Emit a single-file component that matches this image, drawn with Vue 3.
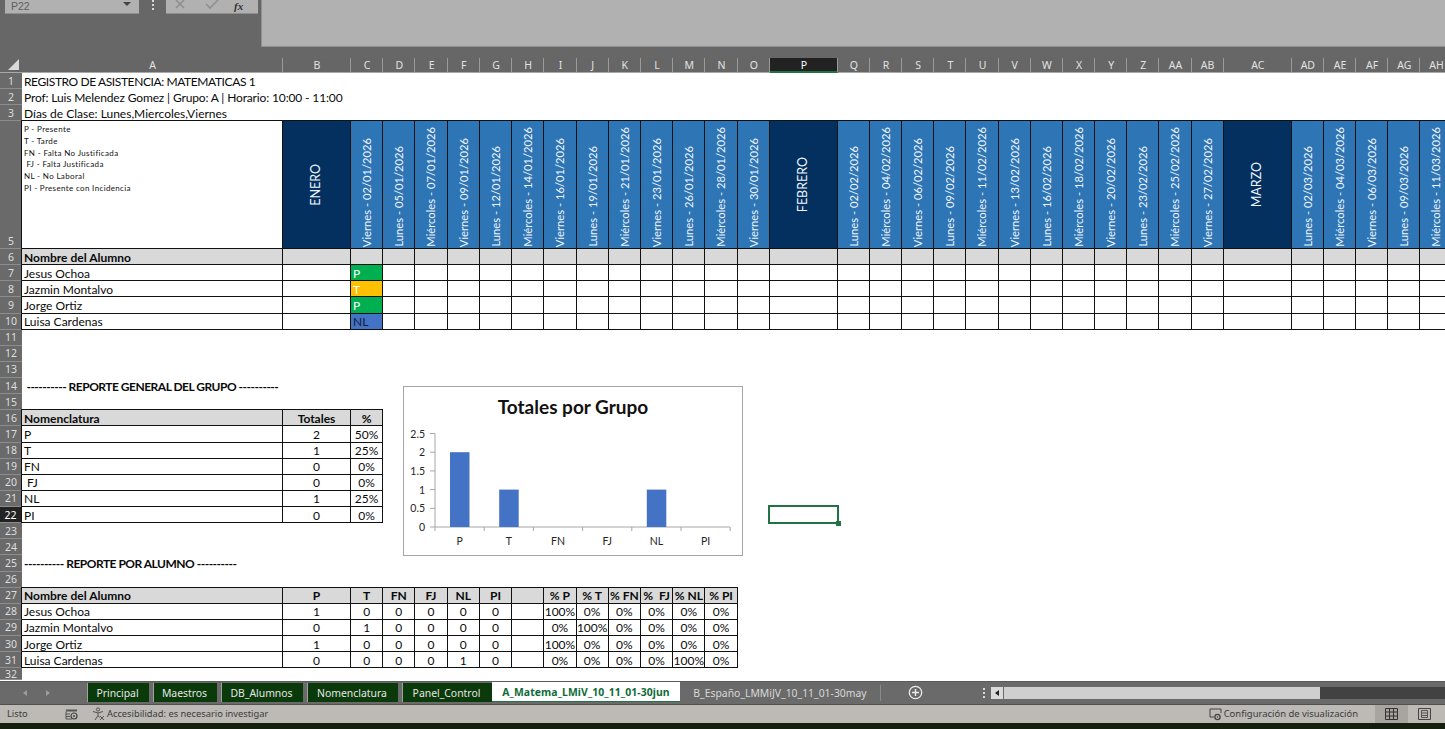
<script setup>
// columnas de la hoja: A..AH
const letters = 'ABCDEFGHIJKLMNOPQRSTUVWXYZ'.split('');
const columns = [...letters, 'AA', 'AB', 'AC', 'AD', 'AE', 'AF', 'AG', 'AH'];
const rowNums = [1, 2, 3, 5];
for (let n = 6; n <= 32; n++) rowNums.push(n);

const weekday = (d, m) => {
  const names = ['Domingo', 'Lunes', 'Martes', 'Miércoles', 'Jueves', 'Viernes', 'Sábado'];
  return names[new Date(2026, m - 1, d).getDay()];
};
const fmt = (d, m) => `${weekday(d, m)} - ${String(d).padStart(2, '0')}/${String(m).padStart(2, '0')}/2026`;

const header = [
  { month: 'ENERO' },
  ...[2, 5, 7, 9, 12, 14, 16, 19, 21, 23, 26, 28, 30].map((d) => fmt(d, 1)),
  { month: 'FEBRERO' },
  ...[2, 4, 6, 9, 11, 13, 16, 18, 20, 23, 25, 27].map((d) => fmt(d, 2)),
  { month: 'MARZO' },
  ...[2, 4, 6, 9, 11].map((d) => fmt(d, 3))
];

const legend = ['P - Presente', 'T - Tarde', 'FN - Falta No Justificada', '\u00a0FJ - Falta Justificada', 'NL - No Laboral', 'PI - Presente con Incidencia'];

const cells = {};
const put = (col, row, text, cls = '') => {
  cells[col + row] = { text, cls };
};

put('A', 1, 'REGISTRO DE ASISTENCIA: MATEMATICAS 1', 'caps');
put('A', 2, 'Prof: Luis Melendez Gomez | Grupo: A | Horario: 10:00 - 11:00', 'tight');
put('A', 3, 'Días de Clase: Lunes,Miercoles,Viernes');

// tabla principal de asistencia
columns.forEach((col, i) => {
  if (i === 0) {
    put(col, 5, '', 'b legend');
  } else {
    const h = header[i - 1];
    put(col, 5, h.month || h, h.month ? 'b month' : 'b date');
  }
  put(col, 6, '', 'b head');
  for (let r = 7; r <= 10; r++) put(col, r, '', 'b');
});
put('A', 6, 'Nombre del Alumno', 'b head strong');
const students = ['Jesus Ochoa', 'Jazmin Montalvo', 'Jorge Ortiz', 'Luisa Cardenas'];
students.forEach((s, i) => put('A', 7 + i, s, 'b'));
put('C', 7, 'P', 'b mark-p');
put('C', 8, 'T', 'b mark-t');
put('C', 9, 'P', 'b mark-p');
put('C', 10, 'NL', 'b mark-nl');

// reporte general
put('A', 14, '\u00a0---------- REPORTE GENERAL DEL GRUPO ----------', 'strong section');
put('A', 16, 'Nomenclatura', 'b head strong');
put('B', 16, 'Totales', 'b head strong center');
put('C', 16, '%', 'b head strong center');
const totals = [['P', 2, '50%'], ['T', 1, '25%'], ['FN', 0, '0%'], ['\u00a0FJ', 0, '0%'], ['NL', 1, '25%'], ['PI', 0, '0%']];
totals.forEach((t, i) => {
  put('A', 17 + i, t[0], 'b');
  put('B', 17 + i, t[1], 'b center');
  put('C', 17 + i, t[2], 'b center');
});

// reporte por alumno
put('A', 25, '---------- REPORTE POR ALUMNO ----------', 'strong section');
const perCols = ['B', 'C', 'D', 'E', 'F', 'G', 'H', 'I', 'J', 'K', 'L', 'M', 'N'];
const perHead = ['P', 'T', 'FN', 'FJ', 'NL', 'PI', '', '% P', '% T', '% FN', '%\u00a0\u00a0FJ', '% NL', '% PI'];
put('A', 27, 'Nombre del Alumno', 'b head strong');
perCols.forEach((c, i) => put(c, 27, perHead[i], 'b head strong center'));
const perRows = [
  [1, 0, 0, 0, 0, 0, '', '100%', '0%', '0%', '0%', '0%', '0%'],
  [0, 1, 0, 0, 0, 0, '', '0%', '100%', '0%', '0%', '0%', '0%'],
  [1, 0, 0, 0, 0, 0, '', '100%', '0%', '0%', '0%', '0%', '0%'],
  [0, 0, 0, 0, 1, 0, '', '0%', '0%', '0%', '0%', '100%', '0%']
];
perRows.forEach((vals, r) => {
  put('A', 28 + r, students[r], 'b');
  perCols.forEach((c, i) => put(c, 28 + r, vals[i], 'b center'));
});
put('P', 22, '', 'selected');

const cellOf = (col, row) => cells[col + row] || { text: '', cls: '' };

// grafico
const chartData = [['P', 2], ['T', 1], ['FN', 0], ['FJ', 0], ['NL', 1], ['PI', 0]];
const ticks = ['0', '0.5', '1', '1.5', '2', '2.5'];
const slot = 49.2;
const unit = 37.4;
const baseY = 140;

const tabs = ['Principal', 'Maestros', 'DB_Alumnos', 'Nomenclatura', 'Panel_Control'];
</script>

<template>
  <div class="app">
    <div class="ribbon">
      <div class="name-box">
        <span>P22</span>
        <i class="chev"></i>
      </div>
      <div class="dots"><b></b><b></b><b></b></div>
      <div class="func-box">
        <svg width="16" height="13" viewBox="0 0 16 13"><path d="M3 0 L11 8 M11 0 L3 8" stroke="#8c8c8c" stroke-width="1.4" fill="none" /></svg>
        <svg width="16" height="13" viewBox="0 0 16 13"><path d="M2 4 L6 8 L14 0" stroke="#8c8c8c" stroke-width="1.4" fill="none" /></svg>
        <span class="fx">fx</span>
      </div>
      <div class="formula"></div>
    </div>

    <div class="sheet">
      <div class="corner"><i></i></div>
      <div v-for="col in columns" :key="col" class="col-head" :class="{ picked: col === 'P' }">{{ col }}</div>
      <template v-for="row in rowNums" :key="row">
        <div class="row-head" :class="{ picked: row === 22, tall: row === 5 }">{{ row }}</div>
        <div v-for="col in columns" :key="col" class="cell" :class="cellOf(col, row).cls">
          <div v-if="row === 5 && col === 'A'" class="legend-list">
            <div v-for="l in legend" :key="l">{{ l }}</div>
          </div>
          <span v-else-if="row === 5" class="rot">{{ cellOf(col, row).text }}</span>
          <span v-else>{{ cellOf(col, row).text }}</span>
        </div>
      </template>

      <div class="chart">
        <div class="chart-title">Totales por Grupo</div>
        <svg class="plot" width="338" height="168" viewBox="0 0 338 168">
          <g v-for="(t, i) in ticks" :key="t">
            <line x1="26" x2="31" :y1="baseY - i * unit / 2 * 1" :y2="baseY - i * unit / 2" stroke="#a6a6a6" />
            <text x="21" :y="baseY - i * unit / 2 + 4" text-anchor="end" class="axis">{{ t }}</text>
          </g>
          <line x1="31" x2="31" :y1="baseY - 93.5" :y2="baseY" stroke="#a6a6a6" />
          <line x1="31" x2="326" :y1="baseY" :y2="baseY" stroke="#a6a6a6" />
          <g v-for="(d, i) in chartData" :key="d[0]">
            <line :x1="31 + i * slot" :x2="31 + i * slot" :y1="baseY" :y2="baseY + 4" stroke="#a6a6a6" />
            <rect v-if="d[1]" :x="46 + i * slot" :y="baseY - d[1] * unit" width="19.5" :height="d[1] * unit" fill="#4472c4" />
            <text :x="55.6 + i * slot" :y="baseY + 18" text-anchor="middle" class="axis">{{ d[0] }}</text>
          </g>
          <line :x1="31 + 6 * slot" :x2="31 + 6 * slot" :y1="baseY" :y2="baseY + 4" stroke="#a6a6a6" />
        </svg>
      </div>
    </div>

    <div class="tabs">
      <div class="nav">
        <i class="arrow left"></i>
        <i class="arrow right"></i>
      </div>
      <div v-for="t in tabs" :key="t" class="tab">{{ t }}</div>
      <div class="tab active">A_Matema_LMiV_10_11_01-30jun</div>
      <div class="tab plain">B_Españo_LMMiJV_10_11_01-30may</div>
      <div class="tab-sep"></div>
      <svg class="plus" width="15" height="15" viewBox="0 0 15 15">
        <circle cx="7.5" cy="7.5" r="6.2" fill="none" stroke="#ececec" stroke-width="1.3" />
        <path d="M7.5 4 V11 M4 7.5 H11" stroke="#ececec" stroke-width="1.4" />
      </svg>
      <div class="dots small"><b></b><b></b><b></b></div>
      <div class="scroll">
        <div class="scroll-btn"><i></i></div>
        <div class="thumb"></div>
        <div class="track"></div>
      </div>
    </div>

    <div class="status">
      <span class="listo">Listo</span>
      <svg class="macro" width="13" height="12" viewBox="0 0 13 12">
        <path d="M1 1.5 H12 V3.5 H1 Z" fill="#555" />
        <path d="M1 3.5 V11 H7 M1 6 H5 M1 8.5 H5" stroke="#555" fill="none" />
        <circle cx="9" cy="8" r="3" fill="none" stroke="#444" stroke-width="1.2" />
        <circle cx="9" cy="8" r="1" fill="#444" />
      </svg>
      <svg class="access" width="13" height="14" viewBox="0 0 13 14">
        <circle cx="6" cy="2.5" r="1.6" fill="none" stroke="#555" />
        <path d="M1 4.5 L6 6 L11 4.5 M6 6 V8.5 L3 13 M6 8.5 L7.5 10.5" stroke="#555" fill="none" />
        <path d="M8 9 L12 13 M12 9 L8 13" stroke="#555" fill="none" />
      </svg>
      <span class="access-text">Accesibilidad: es necesario investigar</span>
      <span class="spacer"></span>
      <svg class="display" width="13" height="13" viewBox="0 0 13 13">
        <path d="M5 9 H1 V1 H12 V5" stroke="#444" fill="none" />
        <circle cx="8.5" cy="9" r="2.6" fill="none" stroke="#444" stroke-width="1.3" />
        <circle cx="8.5" cy="9" r="0.8" fill="#444" />
      </svg>
      <span class="display-text">Configuración de visualización</span>
      <div class="view on">
        <svg width="13" height="12" viewBox="0 0 13 12">
          <path d="M.5 .5 H12.5 V11.5 H.5 Z M.5 4 H12.5 M.5 8 H12.5 M4.5 .5 V11.5 M8.5 .5 V11.5" stroke="#333" fill="none" />
        </svg>
      </div>
      <div class="view">
        <svg width="13" height="12" viewBox="0 0 13 12">
          <path d="M.5 .5 H12.5 V11.5 H.5 Z" stroke="#444" fill="none" />
          <path d="M3.5 2.5 H9.5 V9.5 H3.5 Z M3.5 5 H9.5 M3.5 7.5 H9.5" stroke="#555" fill="none" />
        </svg>
      </div>
      <span class="view-end"></span>
    </div>
    <div class="desktop"></div>
  </div>
</template>

<style scoped>
  .app {
    width: 1445px;
    height: 729px;
    display: flex;
    flex-direction: column;
    overflow: hidden;
    background: #666;
    font-family: "Lato", "Liberation Sans", sans-serif;
  }

  /* barra de formulas */
  .ribbon {
    height: 58px;
    flex: none;
    display: flex;
    align-items: flex-start;
    padding-left: 5px;
    background: #676767;
  }
  .name-box {
    width: 134px;
    height: 14px;
    background: #b1b1b1;
    border-bottom: 1px solid #8e8e8e;
    display: flex;
    align-items: flex-start;
    justify-content: space-between;
    padding: 0 8px 0 6px;
    box-sizing: border-box;
    font: 10.5px/12px "Liberation Sans", sans-serif;
    color: #5f5f5f;
  }
  .chev {
    width: 0;
    height: 0;
    border: 4px solid transparent;
    border-top-color: #444;
    border-bottom: 0;
    margin-top: 2px;
  }
  .dots {
    width: 27px;
    display: flex;
    flex-direction: column;
    align-items: center;
    gap: 2px;
    flex: none;
  }
  .dots b {
    width: 2px;
    height: 2px;
    background: #d8d8d8;
  }
  .func-box {
    width: 92px;
    height: 14px;
    background: #b1b1b1;
    border-bottom: 1px solid #8e8e8e;
    display: flex;
    align-items: flex-start;
    padding-left: 7px;
    gap: 15px;
    box-sizing: border-box;
    flex: none;
  }
  .fx {
    font: italic bold 11px/12px "Liberation Serif", serif;
    color: #333;
    margin-left: -1px;
  }
  .formula {
    flex: 1;
    height: 47px;
    margin-left: 3px;
    background: #b1b1b1;
    border-left: 1px solid #8f8f8f;
    border-bottom: 1px solid #8f8f8f;
    box-sizing: border-box;
  }

  /* hoja */
  .sheet {
    position: relative;
    flex: none;
    height: 623px;
    overflow: hidden;
    background: #fff;
    display: grid;
    grid-template-columns: 22px 261px 68px repeat(13, 32.23px) 68px repeat(12, 32.17px) 68px repeat(5, 32.2px);
    grid-template-rows: 15px repeat(3, 16px) 128px repeat(26, 16.13px) 12px;
    font-size: 12px;
    color: #0a0a0a;
  }
  .corner {
    background: #666;
    border-bottom: 1px solid #a8a8a8;
    display: flex;
    align-items: flex-end;
    justify-content: flex-end;
  }
  .corner i {
    width: 0;
    height: 0;
    margin: 0 3px 2px 0;
    border-left: 11px solid transparent;
    border-bottom: 11px solid #d9d9d9;
  }
  .col-head {
    background: #666;
    color: #e2e2e2;
    font: 10.5px "Noto Sans", sans-serif;
    display: flex;
    align-items: center;
    justify-content: center;
    padding-left: 1px;
    border-right: 1px solid #9a9a9a;
    border-bottom: 1px solid #a8a8a8;
  }
  .col-head.picked {
    background: #222;
    color: #fff;
    border-bottom: 2px solid #217346;
  }
  .row-head {
    background: #6a6a6a;
    color: #dedede;
    font: 10.5px/12px "Noto Sans", sans-serif;
    display: flex;
    align-items: center;
    justify-content: center;
    border-bottom: 1px solid #8d8d8d;
    box-sizing: border-box;
  }
  .row-head.tall {
    align-items: flex-end;
    padding-bottom: 1px;
  }
  .row-head.picked {
    background: #222;
    color: #fff;
    border-right: 1px solid #217346;
  }
  .cell {
    position: relative;
    display: flex;
    align-items: center;
    padding: 2px 0 0 2px;
    white-space: nowrap;
    min-width: 0;
    line-height: 1;
  }
  .cell.b {
    border: 1px solid #111;
    margin: -1px 0 0 -1px;
    padding-top: 2px;
    background: #fff;
  }
  .cell.caps {
    letter-spacing: -0.4px;
  }
  .cell.tight {
    letter-spacing: -0.14px;
  }
  .cell.section {
    letter-spacing: -0.5px;
  }
  .cell.head {
    background: #d9d9d9;
  }
  .cell.strong {
    font-weight: 700;
  }
  .cell.center {
    justify-content: center;
    padding-left: 0;
  }
  .cell.legend {
    align-items: flex-start;
    padding-top: 0;
  }
  .legend-list {
    font-size: 8px;
    line-height: 11.8px;
    padding-top: 3px;
    color: #111;
    letter-spacing: 0.35px;
  }
  .cell.date,
  .cell.month {
    color: #eef4fb;
    padding: 0;
    justify-content: center;
  }
  .cell.date {
    background: #2e75b6;
    align-items: flex-end;
    padding-bottom: 1px;
    font-size: 11.2px;
  }
  .cell.month {
    background: #03305f;
    font-size: 12.5px;
  }
  .rot {
    writing-mode: vertical-rl;
    transform: rotate(180deg);
  }
  .mark-p {
    background: #00b050 !important;
    color: #fff;
  }
  .mark-t {
    background: #ffc000 !important;
    color: #fff;
  }
  .mark-nl {
    background: #4472c4 !important;
    color: #10203c;
  }
  .selected::after {
    content: '';
    position: absolute;
    inset: -2px -1px -1px -2px;
    border: 2px solid #217346;
  }
  .selected::before {
    content: '';
    position: absolute;
    right: -3px;
    bottom: -3px;
    width: 5px;
    height: 5px;
    background: #217346;
    z-index: 1;
  }

  /* grafico */
  .chart {
    position: absolute;
    left: 403px;
    top: 328px;
    width: 340px;
    height: 170px;
    box-sizing: border-box;
    border: 1px solid #a6a6a6;
    background: #fff;
  }
  .chart-title {
    text-align: center;
    font-weight: 700;
    font-size: 19px;
    line-height: 22px;
    margin-top: 9px;
    color: #111;
  }
  .plot {
    position: absolute;
    left: 0;
    top: 0;
  }
  .axis {
    font-size: 10.5px;
    fill: #262626;
  }

  /* pestañas */
  .tabs {
    height: 24px;
    flex: none;
    display: flex;
    align-items: flex-start;
    background: #6a6a6a;
    border-top: 1px solid #5a5a5a;
    border-bottom: 1px solid #505050;
    box-sizing: border-box;
    font: 10.4px "Noto Sans", sans-serif;
    color: #e6e6e6;
  }
  .nav {
    width: 87px;
    height: 22px;
    flex: none;
    display: flex;
    gap: 19px;
    align-items: center;
    padding-left: 23px;
    box-sizing: border-box;
  }
  .arrow {
    width: 0;
    height: 0;
    border: 3px solid transparent;
  }
  .arrow.left {
    border-right: 4px solid #9d9d9d;
    border-left: 0;
  }
  .arrow.right {
    border-left: 4px solid #9d9d9d;
    border-right: 0;
  }
  .tab {
    height: 19px;
    margin-top: 1px;
    margin-right: 4px;
    padding-right: 2px;
    background: #0a3a0a;
    border-left: 1px solid #a0a0a0;
    display: flex;
    align-items: center;
    justify-content: center;
    box-sizing: border-box;
    flex: none;
  }
  .tab:nth-child(2) { width: 62px; }
  .tab:nth-child(3) { width: 64px; }
  .tab:nth-child(4) { width: 82px; }
  .tab:nth-child(5) { width: 91px; }
  .tab:nth-child(6) { width: 90px; margin-right: 0; }
  .tab.active {
    width: 188px;
    height: 20px;
    margin: 0;
    padding-right: 0;
    background: #fff;
    color: #0e6b38;
    font-weight: 700;
    letter-spacing: 0.1px;
    border-left: 0;
    border-bottom: 1px solid #217346;
  }
  .tab.plain {
    width: 200px;
    margin: 1px 0 0;
    padding-right: 0;
    background: none;
    border: 0;
    color: #d8d8d8;
  }
  .tab-sep {
    width: 1px;
    height: 16px;
    margin-top: 3px;
    background: #8a8a8a;
    flex: none;
  }
  .plus {
    margin: 3px 0 0 27px;
    flex: none;
  }
  .dots.small {
    width: 14px;
    margin: 6px 0 0 54px;
  }
  .scroll {
    flex: 1;
    height: 12px;
    margin: 5px 0 0 0;
    display: flex;
  }
  .scroll-btn {
    width: 12px;
    background: #dadada;
    display: flex;
    align-items: center;
    justify-content: center;
    margin-right: 1px;
    flex: none;
  }
  .scroll-btn i {
    width: 0;
    height: 0;
    border: 3px solid transparent;
    border-right: 4px solid #222;
    border-left: 0;
  }
  .thumb {
    width: 316px;
    background: #cfcfcf;
    flex: none;
  }
  .track {
    flex: 1;
    background: #424242;
  }

  /* barra de estado */
  .status {
    height: 18px;
    flex: none;
    background: #bdb9b5;
    display: flex;
    align-items: center;
    font: 9.3px/16px "Noto Sans", sans-serif;
    color: #3b3b3b;
  }
  .listo {
    margin-left: 7px;
    width: 58px;
  }
  .macro {
    flex: none;
  }
  .access {
    margin-left: 14px;
    flex: none;
  }
  .access-text {
    margin-left: 2px;
  }
  .spacer {
    flex: 1;
  }
  .display {
    flex: none;
  }
  .display-text {
    font-size: 9.45px;
    margin: 0 17px 0 2px;
  }
  .view {
    width: 33px;
    height: 18px;
    display: flex;
    align-items: center;
    justify-content: center;
  }
  .view.on {
    background: #a8a49f;
  }
  .view-end {
    width: 4px;
  }
  .desktop {
    flex: 1;
    background: #141f10;
  }
</style>

<style>
  html, body {
    margin: 0;
    overflow: hidden;
  }
</style>
